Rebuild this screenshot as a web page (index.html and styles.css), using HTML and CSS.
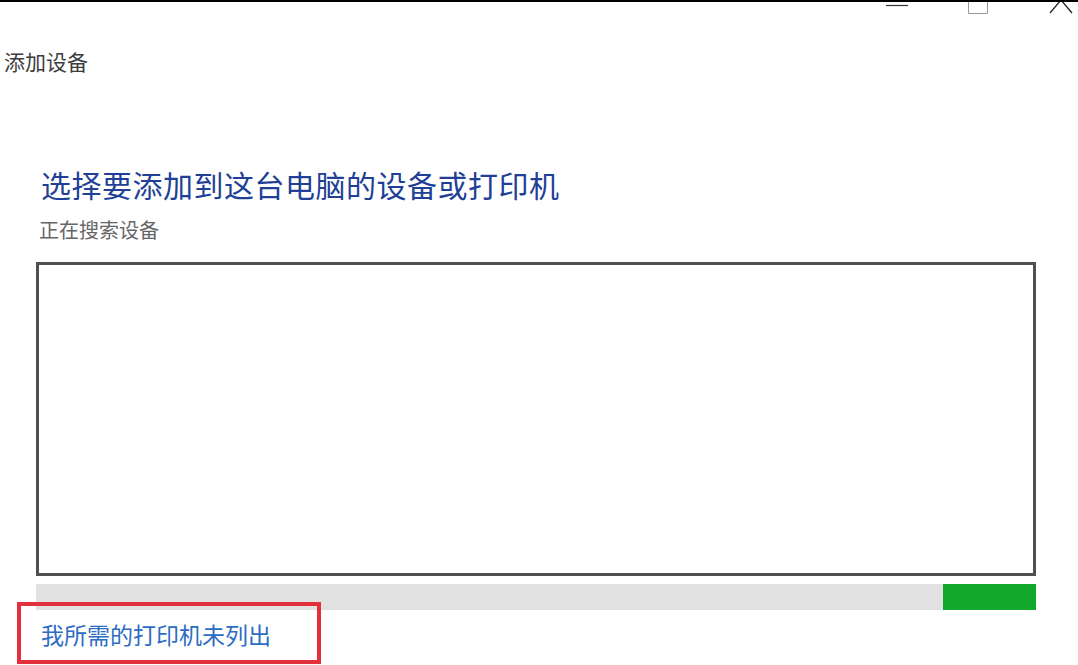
FILE: index.html
```html
<!DOCTYPE html>
<html lang="zh-CN">
<head>
    <meta charset="UTF-8">
    <meta name="viewport" content="width=device-width, initial-scale=1.0">
    <title>添加设备</title>
    <link rel="stylesheet" href="styles.css">
</head>
<body>

    <div class="window">
        <div class="titlebar">
            <div class="controls">
                <svg class="ctrl" width="24" height="14" viewBox="0 0 24 14">
                    <path d="M1 3.5 H23" stroke="#333" stroke-width="1.2"/>
                </svg>
                <svg class="ctrl" width="22" height="14" viewBox="0 0 22 14">
                    <path d="M1.5 0 V11.5 H20.5 V0" fill="none" stroke="#999" stroke-width="1"/>
                </svg>
                <svg class="ctrl" width="24" height="14" viewBox="0 0 24 14">
                    <path d="M12 -2 L1 11 M12 -2 L23 11" fill="none" stroke="#222" stroke-width="1.3"/>
                </svg>
            </div>
            <div class="title">添加设备</div>
        </div>

        <div class="content">
            <h1 class="heading">选择要添加到这台电脑的设备或打印机</h1>
            <p class="status">正在搜索设备</p>

            <div class="device-list"></div>

            <div class="progress">
                <div class="progress-fill"></div>
            </div>

            <div class="link-row">
                <a class="missing-link" href="#">我所需的打印机未列出</a>
            </div>
        </div>
    </div>

</body>
</html>
```

FILE: styles.css
```css
body {
    margin: 0;
    background: #fff;
    font-family: 'Noto Sans CJK SC', 'Noto Sans', sans-serif;
}

.window {
    border-top: 2px solid #000;
    height: 663px;
    overflow: hidden;
}

.titlebar {
    height: 162px;
}

.controls {
    display: flex;
    justify-content: flex-end;
    height: 14px;
}

.ctrl {
    display: block;
}

.controls .ctrl:nth-child(1) {
    margin-right: 58px;
}

.controls .ctrl:nth-child(2) {
    margin-right: 60px;
}

.controls .ctrl:nth-child(3) {
    margin-right: 5px;
}

.title {
    margin-top: 32px;
    padding-left: 4px;
    font-size: 21px;
    line-height: 26px;
    color: #3c3c3c;
}

.content {
    padding: 0 42px 0 36px;
}

.heading {
    margin: 0;
    padding-left: 5px;
    font-size: 30px;
    font-weight: normal;
    letter-spacing: 0.5px;
    line-height: 40px;
    color: #213f96;
}

.status {
    margin: 14px 0 0;
    padding-left: 3px;
    font-size: 20px;
    line-height: 24px;
    color: #666;
}

/* Lista dispositivi vuota */
.device-list {
    margin-top: 20px;
    height: 308px;
    border: 3px solid #505050;
}

.progress {
    display: flex;
    justify-content: flex-end;
    margin-top: 8px;
    height: 26px;
    background: #e1e1e1;
}

.progress-fill {
    width: 93px;
    background: #12a82c;
}

.link-row {
    position: relative;
    padding: 9px 0 0 5px;
}

/* Riquadro rosso di evidenziazione */
.link-row::before {
    content: "";
    position: absolute;
    left: -19px;
    top: -8px;
    width: 296px;
    height: 54px;
    border: 4px solid #e2303d;
}

.missing-link {
    position: relative;
    font-size: 23px;
    line-height: 30px;
    color: #2c6cc3;
    text-decoration: none;
}
```
